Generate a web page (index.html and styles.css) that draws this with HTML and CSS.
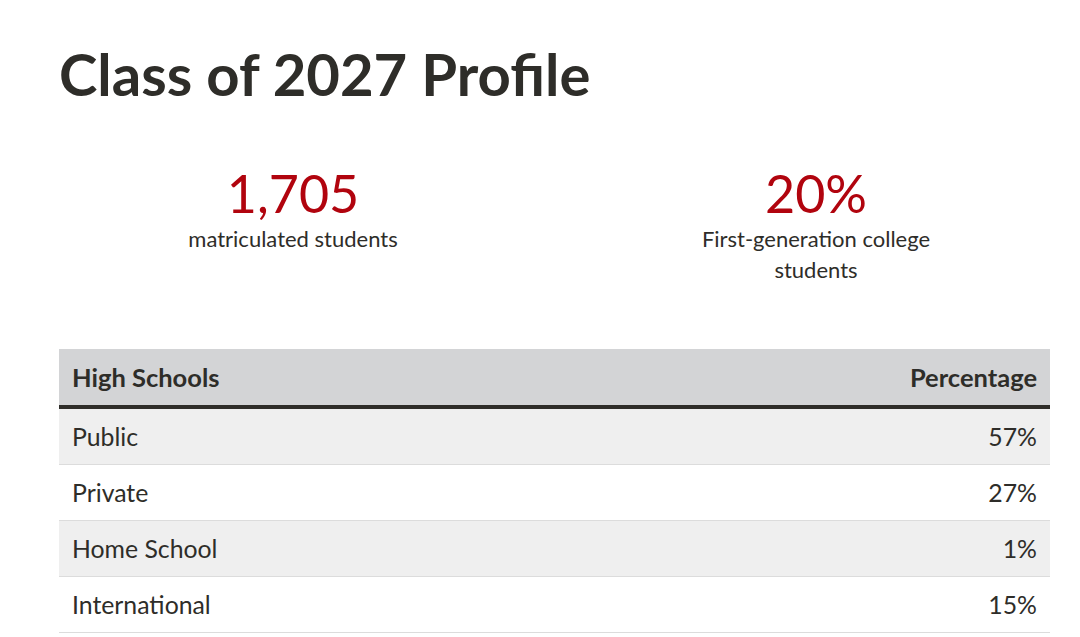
FILE: index.html
```html
<!DOCTYPE html>
<html lang="en">
<head>
<meta charset="utf-8">
<title>Class of 2027 Profile</title>
<link rel="stylesheet" href="styles.css">
</head>
<body>
<main class="page">
  <h1 class="title">Class of 2027 Profile</h1>
  <section class="stats">
    <div class="stat">
      <div class="stat-num">1,705</div>
      <div class="stat-label">matriculated students</div>
    </div>
    <div class="stat">
      <div class="stat-num">20%</div>
      <div class="stat-label">First-generation college students</div>
    </div>
  </section>
  <table class="data">
    <thead>
      <tr><th class="left">High Schools</th><th class="right">Percentage</th></tr>
    </thead>
    <tbody>
      <tr class="odd"><td class="left">Public</td><td class="right">57%</td></tr>
      <tr><td class="left">Private</td><td class="right">27%</td></tr>
      <tr class="odd"><td class="left">Home School</td><td class="right">1%</td></tr>
      <tr><td class="left">International</td><td class="right">15%</td></tr>
    </tbody>
  </table>
</main>
</body>
</html>
```
FILE: styles.css
```css
html, body {
  margin: 0;
  padding: 0;
  background: #ffffff;
}
body {
  font-family: "Lato", "Liberation Sans", sans-serif;
  color: #2e2d29;
}
.page {
  width: 991px;
  margin-left: 59px;
}
.title {
  margin: 0;
  padding-top: 38px;
  font-size: 58px;
  line-height: 72px;
  font-weight: 700;
  color: #2e2d29;
}
.stats {
  display: grid;
  grid-template-columns: 468px 468px;
  column-gap: 55px;
  margin-top: 55px;
}
.stat {
  display: flex;
  flex-direction: column;
  align-items: center;
  text-align: center;
}
.stat-num {
  font-size: 52px;
  line-height: 56px;
  font-weight: 400;
  color: #b1040e;
}
.stat-label {
  max-width: 260px;
  margin-top: 2px;
  font-size: 22px;
  line-height: 31px;
  color: #2e2d29;
}
.data {
  width: 991px;
  margin-top: 64px;
  border-collapse: collapse;
  font-size: 24.8px;
}
.data th {
  background: #d3d4d6;
  font-weight: 700;
  font-size: 25.5px;
  height: 56px;
  padding: 0 13px;
  border-bottom: 4px solid #2e2d29;
  vertical-align: middle;
}
.data td {
  height: 55px;
  padding: 0 13px;
  border-bottom: 1px solid #dcdcdc;
  vertical-align: middle;
}
.data tr.odd td {
  background: #efefef;
}
.left { text-align: left; }
.right { text-align: right; }
```
